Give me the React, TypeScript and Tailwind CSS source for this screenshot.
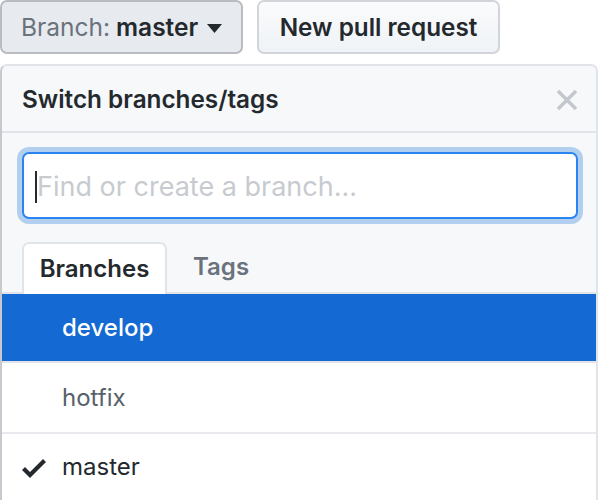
export default function App() {
  return (
    <div
      className="w-[598px] h-[500px] bg-white overflow-hidden"
      style={{ fontFamily: 'Inter, "Liberation Sans", sans-serif' }}
    >
      {/* Top buttons */}
      <div className="flex gap-[14px] h-[54px]">
        <button className="w-[243px] h-[54px] flex items-center pl-[19px] gap-[7px] rounded-[7px] border-2 border-[#b9bdc2] bg-[#e7ebef] text-[24.5px] leading-none">
          <span className="text-[#6a737d]">Branch:</span>
          <span className="font-semibold text-[#24292e] -ml-[1px]">master</span>
          <svg width="15" height="9" viewBox="0 0 15 9" className="ml-[2px] mt-[2px]">
            <path d="M0 0h15L7.5 9z" fill="#24292e" />
          </svg>
        </button>
        <button className="w-[243px] h-[54px] flex items-center justify-center rounded-[7px] border-2 border-[#d1d5da] bg-gradient-to-b from-[#fafbfc] to-[#eff3f6] text-[24.3px] leading-none font-semibold text-[#24292e]">
          New pull request
        </button>
      </div>

      {/* Dropdown panel */}
      <div className="mt-[10px] w-[598px] rounded-t-[7px] border-t-2 border-x-2 border-t-[#e1e4e8] border-l-[#c6cacf] border-r-[#e1e4e8] bg-[#f6f8fa]">
        <div className="h-[67px] flex items-center justify-between pl-[20px] pr-[18px] border-b-2 border-[#e1e4e8]">
          <span className="text-[24.3px] font-semibold text-[#24292e] leading-none mt-[2px]">Switch branches/tags</span>
          <svg width="22" height="22" viewBox="0 0 22 22" className="mt-[2px]">
            <path d="M2 2L20 20M20 2L2 20" stroke="#c4c8cd" strokeWidth="3.5" />
          </svg>
        </div>

        <div className="pt-[19px] pl-[20px] pr-[18px]">
          <div className="h-[67px] w-[556px] rounded-[7px] border-2 border-[#2c84f0] bg-white shadow-[0_0_0_5px_rgba(3,102,214,0.28)] flex items-center pl-[11px]">
            <span className="w-[2px] h-[32px] bg-[#24292e] mt-[2px]" />
            <span className="text-[27px] text-[#c7cbd0] leading-none mt-[1px]">Find or create a branch...</span>
          </div>
        </div>

        <div className="mt-[23px] flex items-end pl-[20px] border-b-2 border-[#e1e4e8] h-[52px]">
          <div className="w-[145px] h-[52px] -mb-[2px] rounded-t-[7px] border-2 border-b-0 border-[#e1e4e8] bg-white flex items-center justify-center">
            <span className="text-[24px] font-semibold text-[#24292e] leading-none">Branches</span>
          </div>
          <div className="h-[50px] flex items-center pl-[26px]">
            <span className="text-[24px] font-semibold text-[#6a737d] leading-none">Tags</span>
          </div>
        </div>

        <div className="bg-white">
          <div className="h-[69px] bg-[#1469d3] flex items-center pl-[60px] border-b-2 border-[#e1e4e8]">
            <span className="text-[24px] font-medium text-white leading-none">develop</span>
          </div>
          <div className="h-[71px] flex items-center pl-[60px] border-b-2 border-[#e8eaed]">
            <span className="text-[24px] text-[#586069] leading-none">hotfix</span>
          </div>
          <div className="h-[66px] flex items-center pl-[20px]">
            <svg width="24" height="32" viewBox="0 0 12 16" className="mt-[1px]">
              <path d="M12 5l-8 8-4-4 1.5-1.5L4 10l6.5-6.5L12 5z" fill="#24292e" />
            </svg>
            <span className="ml-[16px] text-[24px] text-[#24292e] leading-none">master</span>
          </div>
        </div>
      </div>
    </div>
  );
}
